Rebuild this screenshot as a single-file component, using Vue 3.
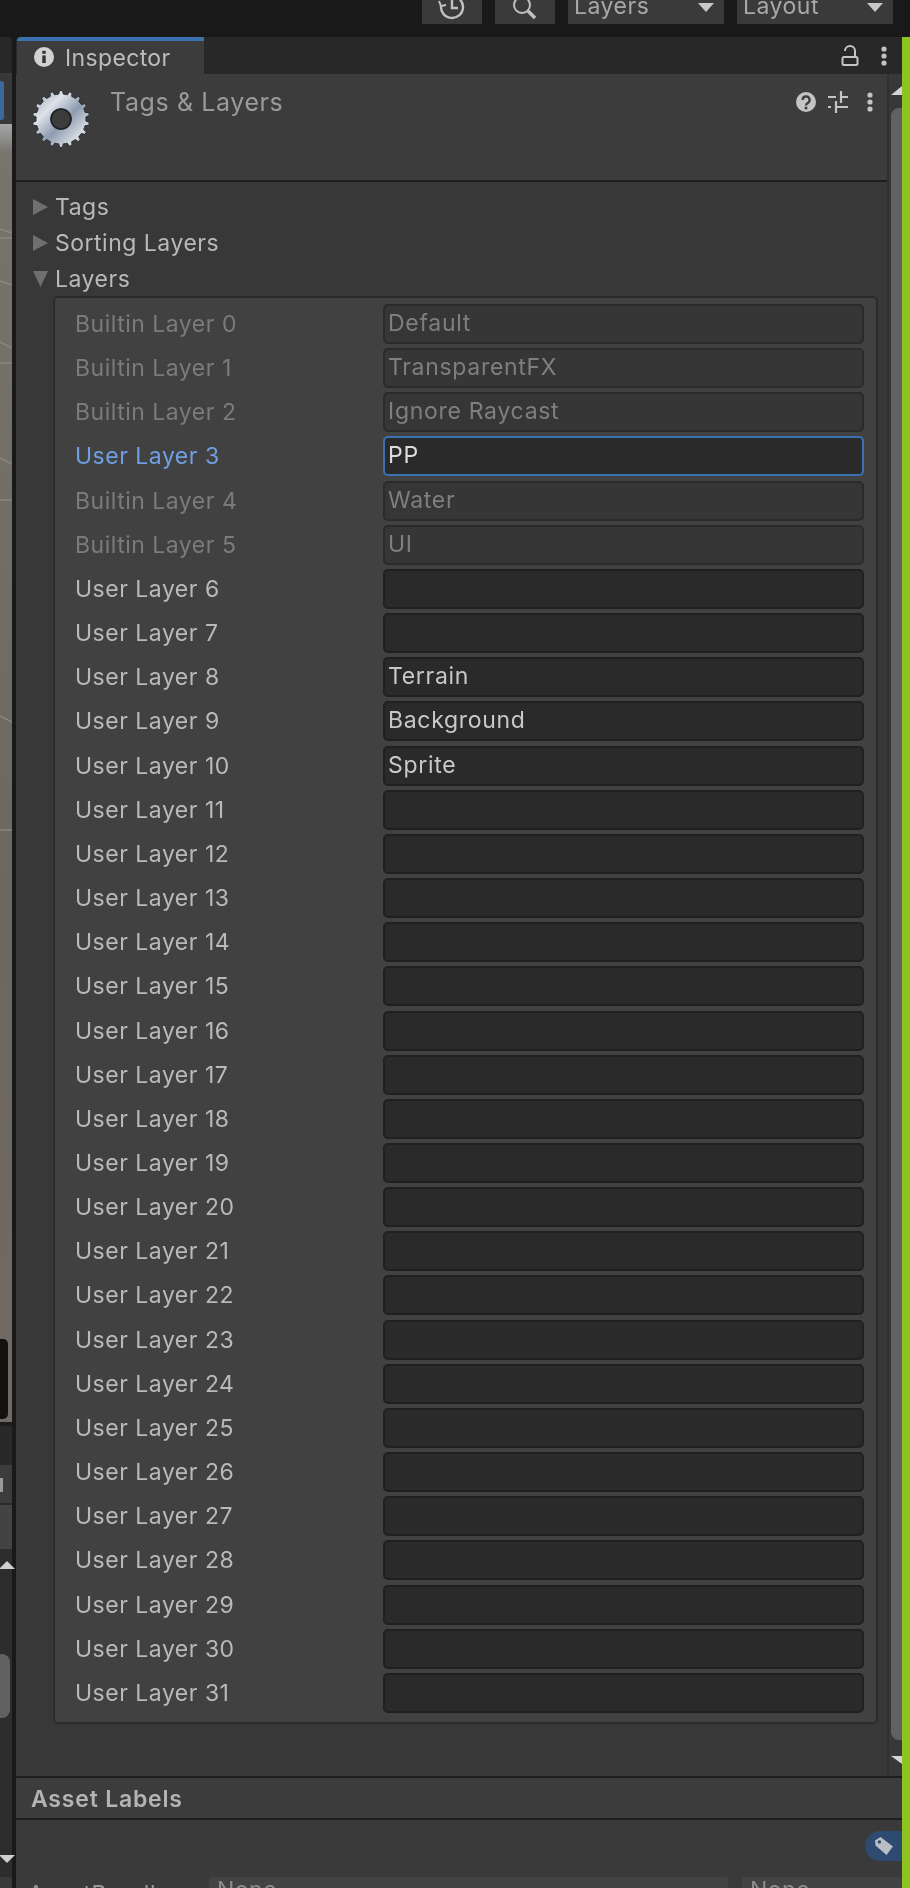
<script setup>
const names = { 0: 'Default', 1: 'TransparentFX', 2: 'Ignore Raycast', 3: 'PP', 4: 'Water', 5: 'UI', 8: 'Terrain', 9: 'Background', 10: 'Sprite' }
const builtin = [0, 1, 2, 4, 5]
const rows = Array.from({ length: 32 }, (_, i) => ({
  id: i,
  label: (builtin.includes(i) ? 'Builtin Layer ' : 'User Layer ') + i,
  value: names[i] || '',
  state: builtin.includes(i) ? 'off' : i === 3 ? 'focus' : 'on',
}))

function gearPath(cx, cy, outer, root, hole, teeth) {
  let d = ''
  const step = (Math.PI * 2) / teeth
  for (let i = 0; i < teeth; i++) {
    const a = i * step - Math.PI / 2
    const pts = [
      [root, a - step * 0.5],
      [root, a - step * 0.27],
      [outer, a - step * 0.14],
      [outer, a + step * 0.14],
      [root, a + step * 0.27],
    ]
    pts.forEach(([r, t], j) => {
      d += (i === 0 && j === 0 ? 'M' : 'L') + (cx + r * Math.cos(t)).toFixed(2) + ' ' + (cy + r * Math.sin(t)).toFixed(2)
    })
  }
  d += `Z M${cx + hole} ${cy}A${hole} ${hole} 0 1 0 ${cx - hole} ${cy}A${hole} ${hole} 0 1 0 ${cx + hole} ${cy}Z`
  return d
}
const gear = gearPath(32, 32, 28.5, 25, 10, 18)
</script>

<template>
  <div class="app">
    <header class="topbar">
      <div class="tool icon-tool">
        <svg width="28" height="24" viewBox="0 0 28 24" class="ico-line">
          <path d="M3.2 5A11 11 0 1 0 14 -4" />
          <path d="M1 1l2 5 5-1" stroke-width="2" />
          <path d="M14 0v8h6" />
        </svg>
      </div>
      <div class="tool icon-tool">
        <svg width="28" height="24" viewBox="0 0 28 24" class="ico-line">
          <circle cx="11" cy="5" r="8" stroke-width="2" />
          <path d="M17 11l7 7" stroke-width="3.5" />
        </svg>
      </div>
      <div class="tool drop"><span>Layers</span><i class="caret"></i></div>
      <div class="tool drop"><span>Layout</span><i class="caret"></i></div>
    </header>

    <div class="main">
      <aside class="strip">
        <div class="strip-tabs"></div>
        <div class="strip-tools"><b class="strip-btn"></b></div>
        <div class="scene">
          <svg class="scene-lines" width="12" height="1298" viewBox="0 0 12 1298" fill="none" stroke="#8d8781" stroke-width="1.5">
            <path d="M0 105l12 4" /><path d="M0 114h12" /><path d="M0 157l12 4" /><path d="M0 218l12 6" /><path d="M0 239h12" />
            <path d="M0 334l12 6" /><path d="M0 376h12" /><path d="M0 592l12 6" /><path d="M0 706h12" />
          </svg>
          <b class="scene-chip"></b>
        </div>
        <div class="strip-bar"></div>
        <div class="strip-row mid"><em></em></div>
        <div class="strip-row light"></div>
        <div class="strip-scroll">
          <i class="up"></i>
          <b class="thumb"></b>
          <i class="down"></i>
        </div>
        <div class="strip-end"></div>
      </aside>

      <section class="inspector">
        <div class="tabbar">
          <div class="tab">
            <svg width="20" height="20" viewBox="0 0 20 20"><circle cx="10" cy="10" r="10" fill="#d2d2d2" /><rect x="8.3" y="8.4" width="3.4" height="7.6" fill="#333" /><rect x="8.3" y="3.8" width="3.4" height="3" fill="#333" /></svg>
            <span>Inspector</span>
          </div>
          <div class="tab-tools">
            <svg width="18" height="21" viewBox="0 0 18 21" fill="none" stroke="#c4c4c4" stroke-width="2"><rect x="1.5" y="12" width="15" height="8" rx="1.5" /><path d="M4 6a5 5 0 0 1 10 0v6" /></svg>
            <svg width="6" height="20" viewBox="0 0 6 20" fill="#c4c4c4"><circle cx="3" cy="3" r="2.6" /><circle cx="3" cy="10" r="2.6" /><circle cx="3" cy="17" r="2.6" /></svg>
          </div>
        </div>

        <div class="body">
          <div class="pane">
            <div class="asset-head">
              <svg class="gear" width="64" height="64" viewBox="0 0 64 64">
                <defs>
                  <linearGradient id="metal" x1="0" y1="0" x2="1" y2="1">
                    <stop offset="0" stop-color="#8d9cb0" /><stop offset=".3" stop-color="#dfe3ea" /><stop offset=".55" stop-color="#8e9bb0" /><stop offset=".8" stop-color="#d8dce2" /><stop offset="1" stop-color="#7d8899" />
                  </linearGradient>
                </defs>
                <path :d="gear" fill="url(#metal)" fill-rule="evenodd" stroke="#2a2d33" stroke-width="1" />
                <circle cx="32" cy="32" r="10" fill="none" stroke="#1e2024" stroke-width="1.6" />
              </svg>
              <div class="asset-title">Tags &amp; Layers</div>
              <div class="asset-tools">
                <svg width="20" height="20" viewBox="0 0 20 20"><circle cx="10" cy="10" r="10" fill="#c4c4c4" /><path d="M6.6 8a3.5 3.5 0 1 1 5.2 3c-1.2.7-1.8 1.1-1.8 2.4" fill="none" stroke="#3c3c3c" stroke-width="2.3" /><circle cx="10" cy="16" r="1.5" fill="#3c3c3c" /></svg>
                <svg width="22" height="22" viewBox="0 0 22 22" fill="none" stroke="#c4c4c4" stroke-width="2.2"><path d="M1 6h8M14 0v12M14 6h7M1 16h3M9 10v12M9 16h12" /></svg>
                <svg width="6" height="20" viewBox="0 0 6 20" fill="#c4c4c4"><circle cx="3" cy="3" r="2.6" /><circle cx="3" cy="10" r="2.6" /><circle cx="3" cy="17" r="2.6" /></svg>
              </div>
            </div>

            <div class="content">
              <div class="fold"><i class="tri right"></i><span>Tags</span></div>
              <div class="fold"><i class="tri right"></i><span>Sorting Layers</span></div>
              <div class="fold"><i class="tri open"></i><span>Layers</span></div>
              <div class="panel">
                <div v-for="r in rows" :key="r.id" class="row" :class="r.state">
                  <label>{{ r.label }}</label>
                  <div class="field">{{ r.value }}</div>
                </div>
              </div>
            </div>
          </div>
          <div class="scrollbar">
            <i class="sb-up"></i>
            <b class="sb-thumb"></b>
            <i class="sb-down"></i>
          </div>
        </div>

        <div class="labels-bar">Asset Labels</div>
        <div class="labels-body">
          <div class="tag-line">
            <div class="tag-pill">
              <svg width="20" height="20" viewBox="0 0 20 20"><path fill-rule="evenodd" fill="#b9bdc4" d="M1 4.5L6.5 1 19 10.5 12.5 19 1.5 9.5ZM5.4 4.2a1.7 1.7 0 1 0 .01 0Z" /></svg>
            </div>
          </div>
          <div class="bundle">
            <span class="bundle-label">AssetBundle</span>
            <div class="bundle-field wide">None</div>
            <div class="bundle-field">None</div>
          </div>
        </div>
      </section>
      <div class="accent"></div>
    </div>
  </div>
</template>

<style>
html, body { margin: 0; background: #191919; }
</style>

<style scoped>
.app {
  width: 910px;
  height: 1888px;
  overflow: hidden;
  display: flex;
  flex-direction: column;
  background: #191919;
  font-family: Inter, "Liberation Sans", sans-serif;
  font-size: 23px;
  letter-spacing: 0.5px;
  color: #b9b9b9;
  filter: blur(0.4px);
}
.topbar {
  height: 37px;
  flex: none;
  display: flex;
  gap: 13px;
  padding-left: 422px;
  box-sizing: border-box;
  background: #191919;
}
.tool {
  height: 24px;
  background: #3a3a3a;
  overflow: hidden;
  flex: none;
  display: flex;
}
.icon-tool { width: 60px; justify-content: center; }
.ico-line { fill: none; stroke: #c0c0c0; stroke-width: 2.4; }
.drop {
  width: 156px;
  box-sizing: border-box;
  padding: 0 6px;
  justify-content: space-between;
  align-items: flex-start;
  color: #a8a8a8;
}
.drop span { line-height: 26px; margin-top: -7px; }
.caret {
  width: 0;
  height: 0;
  margin: 3px 4px 0 0;
  border-left: 8px solid transparent;
  border-right: 8px solid transparent;
  border-top: 9px solid #c8c8c8;
}
.main { flex: 1; display: flex; min-height: 0; }
.strip { width: 12px; flex: none; margin-right: 4px; display: flex; flex-direction: column; }
.strip-tabs { height: 36px; flex: none; background: #282828; border-radius: 0 4px 0 0; }
.strip-tools { height: 51px; flex: none; background: #383838; padding-top: 8px; box-sizing: border-box; }
.strip-btn { display: block; width: 4px; height: 39px; background: #3c689b; border-radius: 0 3px 3px 0; }
.scene {
  position: relative;
  height: 1298px;
  flex: none;
  box-sizing: border-box;
  background: linear-gradient(#a3a7a5 0, #77736d 30px, #6d6761 60%, #716a64 100%);
  overflow: hidden;
}
.scene-lines { position: absolute; left: 0; top: 0; }
.scene-chip {
  position: absolute;
  left: 0;
  top: 1215px;
  width: 8px;
  height: 80px;
  background: #14120e;
  border-radius: 0 5px 5px 0;
}
.strip-bar { height: 43px; flex: none; background: #292929; border-top: 4px solid #1d1d1d; box-sizing: border-box; }
.strip-row { flex: none; box-sizing: border-box; }
.strip-row.mid { height: 40px; background: #3c3c3c; border-bottom: 2px solid #2a2a2a; }
.strip-row.mid em { display: block; width: 3px; height: 14px; margin: 13px 0 0 0; background: #9a9a9a; }
.strip-row.light { height: 44px; background: #434343; }
.strip-scroll {
  flex: none;
  height: 328px;
  background: #2d2d2d;
  display: flex;
  flex-direction: column;
  align-items: flex-start;
}
.up {
  width: 0; height: 0; margin: 12px 0 0 -1px;
  border-left: 8px solid transparent; border-right: 8px solid transparent;
  border-bottom: 8px solid #d0d0d0;
}
.thumb { width: 10px; height: 64px; margin-top: 85px; background: #616161; border-radius: 0 8px 8px 0; }
.down {
  width: 0; height: 0; margin: 137px 0 0 -1px;
  border-left: 8px solid transparent; border-right: 8px solid transparent;
  border-top: 8px solid #d0d0d0;
}
.strip-end { flex: 1; background: #3a3a3a; }

.inspector { width: 886px; flex: none; display: flex; flex-direction: column; min-height: 0; }
.tabbar {
  height: 37px;
  flex: none;
  display: flex;
  justify-content: space-between;
  background: #282828;
  border-radius: 4px 0 0 0;
}
.tab {
  width: 187px;
  margin-left: 1px;
  box-sizing: border-box;
  border-top: 4px solid #3a72b0;
  background: #3c3c3c;
  display: flex;
  align-items: center;
  gap: 11px;
  padding-left: 17px;
  color: #bdbdbd;
  letter-spacing: 0.35px;
  border-radius: 4px 0 0 0;
}
.tab svg { margin-top: -2px; }
.tab-tools { display: flex; align-items: center; gap: 22px; padding-right: 15px; }

.body { flex: 1; display: flex; min-height: 0; }
.pane { width: 871px; flex: none; display: flex; flex-direction: column; }
.asset-head {
  height: 108px;
  flex: none;
  box-sizing: border-box;
  background: #3c3c3c;
  border-bottom: 2px solid #1e1e1e;
  display: flex;
  align-items: flex-start;
  padding: 13px 0 0 13px;
}
.gear { flex: none; }
.asset-title { margin: 1px 0 0 17px; color: #9a9a9a; font-size: 25px; letter-spacing: 0.6px; line-height: 28px; flex: 1; }
.asset-tools { display: flex; align-items: center; gap: 11px; padding: 4px 14px 0 0; }
.asset-tools svg:nth-child(2) { margin-right: 7px; }

.content { flex: 1; background: #383838; padding-top: 7px; }
.fold { height: 36px; display: flex; align-items: center; padding-left: 17px; color: #b9b9b9; }
.fold span { margin-left: 7px; }
.tri { width: 15px; height: 16px; flex: none; background: #6f6f6f; }
.tri.right { clip-path: polygon(0 0, 100% 50%, 0 100%); }
.tri.open { clip-path: polygon(0 0, 100% 0, 50% 100%); }
.panel {
  margin: -1px 9px 0 37px;
  padding: 6px 12px 7px 20px;
  box-sizing: border-box;
  height: 1428px;
  background: #414141;
  border: 2px solid #2b2b2b;
  border-radius: 5px;
  display: flex;
  flex-direction: column;
  gap: 4.16px;
}
.row { height: 40px; flex: none; display: flex; align-items: center; }
.row label { width: 308px; flex: none; }
.field {
  flex: 1;
  height: 40px;
  box-sizing: border-box;
  border: 2px solid #202020;
  border-radius: 5px;
  background: #2a2a2a;
  padding-left: 3px;
  line-height: 35px;
  letter-spacing: 0.7px;
  color: #c8c8c8;
}
.row.off label { color: #7b7b7b; }
.row.off .field { background: #363636; border-color: #2b2b2b; color: #7f7f7f; }
.row.focus label { color: #6f9fe2; }
.row.focus .field { border-color: #3a72b0; color: #dcdcdc; background: #2a2a2a; }

.scrollbar {
  flex: 1;
  background: #383838;
  border-left: 2px solid #303030;
  display: flex;
  flex-direction: column;
  align-items: flex-end;
}
.sb-up {
  width: 11px; height: 9px; margin-top: 12px;
  background: #d4d4d4;
  clip-path: polygon(100% 0, 100% 100%, 0 100%);
}
.sb-thumb {
  width: 11px;
  height: 1632px;
  margin-top: 13px;
  background: #616161;
  border-radius: 8px 0 0 8px;
}
.sb-down {
  width: 11px; height: 8px; margin-top: 16px;
  background: #d4d4d4;
  clip-path: polygon(0 0, 100% 0, 100% 100%);
}

.labels-bar {
  height: 44px;
  flex: none;
  box-sizing: border-box;
  background: #3c3c3c;
  border-top: 2px solid #1e1e1e;
  border-bottom: 2px solid #1e1e1e;
  padding-left: 15px;
  font-weight: 600;
  letter-spacing: 0.8px;
  line-height: 43px;
  color: #b4b4b4;
}
.labels-body { height: 68px; flex: none; background: #3a3a3a; overflow: hidden; }
.tag-line { height: 57px; display: flex; justify-content: flex-end; align-items: flex-start; padding-top: 11px; box-sizing: border-box; }
.tag-pill {
  width: 37px; height: 30px;
  background: #2d4a70;
  border-radius: 15px 0 0 15px;
  display: flex;
  align-items: center;
  justify-content: center;
}
.bundle { display: flex; position: relative; padding-left: 193px; gap: 14px; }
.bundle-label { position: absolute; left: 12px; top: 3px; color: #999; }
.bundle-field {
  flex: 1;
  height: 30px;
  box-sizing: border-box;
  background: #434343;
  border-radius: 3px 3px 0 0;
  padding-left: 8px;
  line-height: 26px;
  color: #8c8c8c;
}
.bundle-field.wide { flex: none; width: 519px; }
.accent { flex: 1; background: #8fc31f; }
</style>
